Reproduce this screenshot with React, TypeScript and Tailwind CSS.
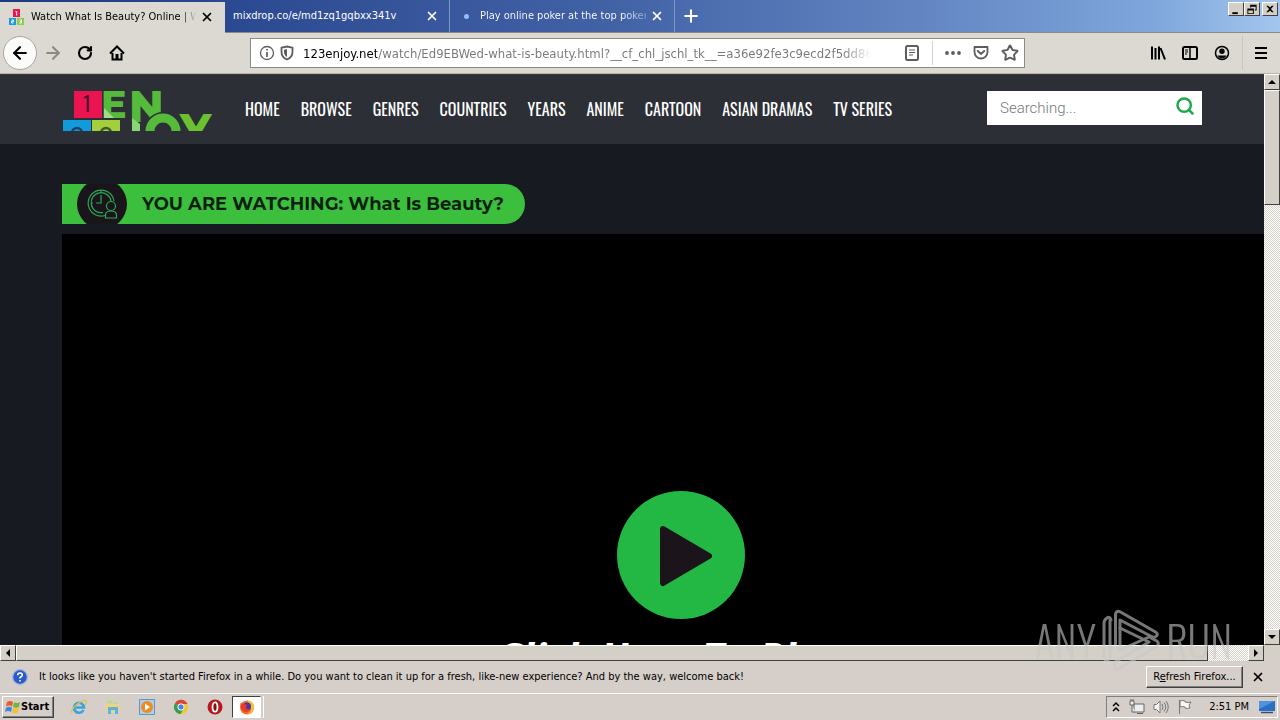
import {
  ArrowLeft,
  ArrowRight,
  Plus,
  RotateCw,
  Search,
  Star,
  X,
} from "lucide-react";

const NAV_LINKS = [
  "HOME",
  "BROWSE",
  "GENRES",
  "COUNTRIES",
  "YEARS",
  "ANIME",
  "CARTOON",
  "ASIAN DRAMAS",
  "TV SERIES",
];

const PAGE_URL =
  "123enjoy.net/watch/Ed9EBWed-what-is-beauty.html?__cf_chl_jschl_tk__=a36e92fe3c9ecd2f5dd86b";

function BlocksIcon() {
  return (
    <svg viewBox="0 0 16 16" className="h-4 w-4 shrink-0">
      <rect x="4" y="0" width="7" height="8" fill="#e8174f" />
      <rect x="0" y="9" width="7" height="7" fill="#1a9be0" />
      <rect x="8" y="9" width="7" height="7" fill="#8ad04a" />
      <path d="M6.500 2.500h1.200v4M2.500 11h2v1.500h-2V14h2M10.500 11h2v3h-2M11 12.500h1.500" stroke="#fff" strokeWidth="1" fill="none" />
    </svg>
  );
}

function TabStrip() {
  return (
    <div className="flex h-[33px] shrink-0 border-b border-[#8c8a86] bg-[linear-gradient(to_right,#1c3a82_0%,#2d4b92_20%,#4262a6_48%,#6386c2_72%,#7ea6dc_90%,#a3c6ee_100%)] text-[11px] text-white">
      <div className="-mb-px mt-[2px] flex w-[225px] items-center bg-[#dcd9d2] pb-px pl-[9px] pr-[11px] text-black">
        <BlocksIcon />
        <span className="ml-[6px] flex-1 overflow-hidden whitespace-nowrap bg-[linear-gradient(to_right,#000_150px,transparent_165px)] bg-clip-text text-transparent">
          Watch What Is Beauty? Online | W
        </span>
        <button aria-label="Close tab" className="ml-1">
          <X className="h-[14px] w-[14px]" strokeWidth={3} />
        </button>
      </div>
      <div className="flex w-[225px] items-center border-r border-[#8397c6] pl-2 pr-[10px]">
        <span className="flex-1 whitespace-nowrap">mixdrop.co/e/md1zq1gqbxx341v</span>
        <button aria-label="Close tab">
          <X className="h-[14px] w-[14px]" strokeWidth={3} />
        </button>
      </div>
      <div className="flex w-[225px] items-center border-r border-[#8397c6] pl-[14px] pr-[10px]">
        <span className="h-[5px] w-[5px] shrink-0 rounded-full bg-[#8fc1f5]" />
        <span className="ml-[11px] flex-1 overflow-hidden whitespace-nowrap bg-[linear-gradient(to_right,#fff_142px,#ffffff60_165px)] bg-clip-text text-transparent">
          Play online poker at the top poker
        </span>
        <button aria-label="Close tab" className="ml-1">
          <X className="h-[14px] w-[14px]" strokeWidth={3} />
        </button>
      </div>
      <button aria-label="New tab" className="ml-[6px]">
        <Plus className="h-5 w-5" strokeWidth={2.5} />
      </button>
      <div className="ml-auto flex items-start pr-[2px] pt-[2px] text-black">
        <WindowButton label="Minimize">
          <path d="M3 10h6v2H3z" />
        </WindowButton>
        <WindowButton label="Restore">
          <path d="M5 2h7v6h-2V7h1V4H6v1H5zM2 6h7v6H2zM3 8v3h5V8z" fillRule="evenodd" />
        </WindowButton>
        <span className="w-[2px]" />
        <WindowButton label="Close">
          <path d="M3 3h2l2 2 2-2h2L8 6.500 11 10H9L7 8l-2 2H3l3-3.500z" />
        </WindowButton>
      </div>
    </div>
  );
}

function WindowButton({ label, children }: { label: string; children: React.ReactNode }) {
  return (
    <button
      aria-label={label}
      className="h-[14px] w-4 border border-[#404040] border-l-white border-t-white bg-[#d4d0c8]"
    >
      <svg viewBox="0 0 14 13" className="h-3 w-[14px]">
        {children}
      </svg>
    </button>
  );
}

function Toolbar() {
  return (
    <div className="flex h-[41px] shrink-0 items-center border-b border-[#b5b2aa] bg-[#dcd9d2] pl-[3px] pr-[11px]">
      <button
        aria-label="Back"
        className="flex h-[34px] w-[34px] items-center justify-center rounded-full border border-[#a8a6a0] bg-[#fbfbfa]"
      >
        <ArrowLeft className="h-5 w-5" strokeWidth={2.5} />
      </button>
      <button aria-label="Forward" className="ml-[6px] text-[#8b8985]">
        <ArrowRight className="h-5 w-5" strokeWidth={2.5} />
      </button>
      <button aria-label="Reload" className="ml-[14px]">
        <RotateCw className="h-4 w-4" strokeWidth={3.2} />
      </button>
      <button aria-label="Home" className="ml-4">
        <svg viewBox="0 0 16 16" className="h-4 w-4">
          <path d="M1 8.500L8 1.500l7 7M3.500 8v6.500h9V8" fill="none" stroke="#000" strokeWidth="2" />
          <path d="M6.500 9h3v5h-3z" />
        </svg>
      </button>
      <div className="ml-[125px] flex h-[30px] w-[775px] items-center border border-[#8d8b87] bg-white text-[#5d5d5d]">
        <svg viewBox="0 0 16 16" className="ml-2 h-4 w-4 shrink-0" fill="none" stroke="currentColor">
          <circle cx="8" cy="8" r="6.500" strokeWidth="1.300" />
          <path d="M8 7v5M8 4v1.600" strokeWidth="1.700" />
        </svg>
        <svg viewBox="0 0 16 16" className="ml-1 h-4 w-4 shrink-0">
          <path d="M8 1.500l5.500 1.200V7c0 4-2.500 6.300-5.500 7.500C5 13.300 2.500 11 2.500 7V2.700z" fill="none" stroke="currentColor" strokeWidth="1.800" />
          <path d="M8 4l-3 .7V7c0 2.500 1.300 4 3 5z" fill="currentColor" />
        </svg>
        <input
          aria-label="Address"
          readOnly
          value={PAGE_URL}
          className="ml-2 h-7 min-w-0 flex-1 bg-[linear-gradient(to_right,#000_74px,#777_74px,#777_540px,transparent_568px)] bg-clip-text text-[13px] text-transparent outline-none"
        />
        <svg viewBox="0 0 16 16" className="ml-[34px] h-4 w-4 shrink-0" fill="none" stroke="currentColor">
          <rect x="2" y="1" width="12" height="14" rx="1.500" strokeWidth="2" />
          <path d="M5 5h6M5 7.500h6M5 10h4" strokeWidth="1.200" />
        </svg>
        <span className="ml-3 h-6 w-px bg-[#d2d2d2]" />
        <svg viewBox="0 0 16 16" className="ml-3 h-4 w-4 shrink-0" fill="currentColor">
          <circle cx="2" cy="8" r="1.900" />
          <circle cx="8" cy="8" r="1.900" />
          <circle cx="14" cy="8" r="1.900" />
        </svg>
        <svg viewBox="0 0 16 16" className="ml-3 h-4 w-4 shrink-0" fill="none" stroke="currentColor" strokeWidth="1.800">
          <path d="M1.500 2h13v5a6.500 6.500 0 0 1-13 0z" strokeLinejoin="round" />
          <path d="M4.800 6L8 9l3.200-3" strokeWidth="2" strokeLinecap="round" />
        </svg>
        <Star className="ml-3 mr-[5px] h-[18px] w-[18px] shrink-0" strokeWidth={2.6} />
      </div>
      <div className="ml-auto flex items-center">
        <button aria-label="Library">
          <svg viewBox="0 0 16 16" className="h-4 w-4" stroke="#000" strokeWidth="2">
            <path d="M2 1.500v13M5.500 3v11.500M9 1.500v13M10.500 3L15 14.500" />
          </svg>
        </button>
        <button aria-label="Sidebars" className="ml-4">
          <svg viewBox="0 0 16 16" className="h-4 w-4" fill="none" stroke="#000">
            <rect x="1" y="2" width="14" height="12" rx="1.500" strokeWidth="2" />
            <path d="M8 2v12" strokeWidth="1.500" />
            <path d="M3 5h3M3 7h3M3 9h2" />
          </svg>
        </button>
        <button aria-label="Account" className="ml-4">
          <svg viewBox="0 0 16 16" className="h-4 w-4">
            <circle cx="8" cy="8" r="6.500" fill="none" stroke="#000" strokeWidth="1.500" />
            <circle cx="8" cy="6.200" r="2.700" />
            <path d="M3.500 10.500h9C11.500 12.500 10 13.500 8 13.500s-3.500-1-4.500-3z" />
          </svg>
        </button>
        <span className="ml-3 h-[34px] w-px bg-[#c9c6bf]" />
        <button aria-label="Menu" className="ml-[10px]">
          <svg viewBox="0 0 16 16" className="h-4 w-4" stroke="#000" strokeWidth="2">
            <path d="M2 3h12M2 8h12M2 13h12" />
          </svg>
        </button>
      </div>
    </div>
  );
}

function SiteLogo() {
  return (
    <svg viewBox="0 0 152 40" className="h-10 w-[152px] shrink-0 overflow-hidden font-['Montserrat',sans-serif] font-extrabold">
      <rect x="12" y="0" width="28" height="27" fill="#ea1550" />
      <text x="21" y="21" fontSize="20" fontFamily="Oswald" fontWeight="400" fill="#4b1430">1</text>
      <rect x="1" y="29" width="28" height="12" fill="#129bdc" />
      <circle cx="15" cy="42" r="5" fill="none" stroke="#174766" strokeWidth="2.500" />
      <rect x="30" y="29" width="28" height="12" fill="#a3cf3c" />
      <circle cx="44" cy="42" r="5" fill="none" stroke="#3d5d2b" strokeWidth="2.500" />
      <text x="39" y="27" fontSize="38" fill="#56bb3a">E</text>
      <path d="M42 17l10 10H42z" fill="#9fdc8b" />
      <text x="67" y="31" fontSize="43" fill="#56bb3a">N</text>
      <path d="M70 27l8 6v7h-8z" fill="#8bd576" />
      <circle cx="101" cy="40" r="13" fill="#2d2f36" stroke="#2d2f36" strokeWidth="12" />
      <circle cx="101" cy="40" r="13" fill="none" stroke="#56bb3a" strokeWidth="9" />
      <text x="118" y="55" fontSize="45" fill="#6cc131">Y</text>
    </svg>
  );
}

function SiteHeader() {
  return (
    <header className="h-[70px] border-t border-[#3a3b38] bg-[#2d2f36] pl-[62px] pt-4">
      <div className="flex w-[1140px] items-start">
        <SiteLogo />
        <nav className="ml-[31px] flex gap-[21px] font-['Oswald',sans-serif] text-[16px] leading-9 text-white">
          {NAV_LINKS.map((label) => (
            <a key={label} href="#" className="whitespace-nowrap">
              {label}
            </a>
          ))}
        </nav>
        <form className="ml-auto flex h-[34px] w-[215px] items-center bg-white">
          <input
            aria-label="Search"
            placeholder="Searching..."
            className="h-full min-w-0 flex-1 pl-[13px] font-['Roboto',sans-serif] text-[15px] font-light outline-none placeholder:text-[#777]"
          />
          <button type="button" aria-label="Search" className="mb-1 mr-[7px]">
            <Search className="h-5 w-5 text-[#22a84c]" strokeWidth={3} />
          </button>
        </form>
      </div>
    </header>
  );
}

function WatchingBanner() {
  return (
    <div className="flex h-10 w-[463px] items-center overflow-hidden rounded-r-[20px] bg-[#3bbf3c]">
      <span className="ml-[15px] flex h-[50px] w-[50px] shrink-0 items-center justify-center rounded-full bg-[#1a141b]">
        <svg viewBox="0 0 32 32" className="h-8 w-8" fill="none" stroke="#2aa957" strokeWidth="1.200">
          <path d="M19 27.500A13 13 0 1 1 28 13" />
          <path d="M17 24.500A10 10 0 1 1 25 13" />
          <path d="M15 7v8h-5M15 3v2M5 15h2" />
          <circle cx="25" cy="18" r="4.500" />
          <path d="M19.500 30v-3q0-4 5.500-4t5.500 4v3z" />
        </svg>
      </span>
      <h1 className="ml-[15px] whitespace-nowrap pt-px font-['Montserrat',sans-serif] text-[18px] font-bold text-[#0c1f12]">
        YOU ARE WATCHING: What Is Beauty?
      </h1>
    </div>
  );
}

function Player() {
  return (
    <div className="-mr-9 ml-[62px] mt-[10px] flex h-[600px] flex-col items-center bg-black pt-[257px]">
      <button aria-label="Play" className="h-[128px] w-[128px]">
        <svg viewBox="0 0 128 128" className="h-full w-full">
          <circle cx="64" cy="64" r="64" fill="#22b843" />
          <path d="M46 38l46 27-46 27z" fill="#1c141b" stroke="#1c141b" strokeWidth="6" strokeLinejoin="round" />
        </svg>
      </button>
      <p className="mt-[14px] whitespace-nowrap pr-6 font-['Open_Sans',sans-serif] text-[41px] font-bold italic leading-[48px] text-white">
        Click Here To Play
      </p>
    </div>
  );
}

function ScrollButton({ label, path }: { label: string; path: string }) {
  return (
    <button
      aria-label={label}
      className="flex h-4 w-4 shrink-0 items-center justify-center border border-[#404040] border-l-white border-t-white bg-[#d4d0c8]"
    >
      <svg viewBox="0 0 8 8" className="h-2 w-2">
        <path d={path} />
      </svg>
    </button>
  );
}

function Watermark() {
  return (
    <div className="pointer-events-none absolute bottom-[48px] right-[48px] flex items-center font-['Oswald',sans-serif] text-[42px] font-light leading-[64px] text-[#c8c8c8] opacity-60">
      <span>ANY</span>
      <svg viewBox="0 0 60 64" className="ml-[6px] mr-1 h-16 w-[60px]" fill="none" stroke="currentColor" strokeWidth="3" strokeLinejoin="round" strokeLinecap="round">
        <path d="M9 12Q8 8 5 10 2 12 2 15v34q0 4 4 3M8 12v38" />
        <path d="M13.500 36V6q1-4 5-2l35 20q3 2 1 4t-4 1L18 12v30l29-13" />
        <path d="M18 20l29 14-34 20q-2 4 0 6t5 0l36-21q4-3 1-6l-6-3" />
      </svg>
      <span>RUN</span>
    </div>
  );
}

function Notification() {
  return (
    <div className="flex h-8 shrink-0 items-center bg-[#d6cfc9] pl-3 pr-[15px] text-[11px]">
      <svg viewBox="0 0 16 16" className="h-4 w-4 shrink-0">
        <circle cx="8" cy="8" r="7.300" fill="#2a5bc8" stroke="#9fb2d8" strokeWidth="1.200" />
        <path d="M5.700 6.200Q5.700 4 8 4t2.300 2q0 1.300-2.300 2.500v1M8 11v1.600" fill="none" stroke="#fff" strokeWidth="1.600" />
      </svg>
      <span className="ml-[11px] whitespace-nowrap">
        It looks like you haven't started Firefox in a while. Do you want to clean it up for a fresh, like-new experience? And by the way, welcome back!
      </span>
      <button className="ml-auto h-[22px] w-[97px] shrink-0 whitespace-nowrap border border-[#404040] border-l-white border-t-white shadow-[inset_-1px_-1px_#808080]">
        R<u>e</u>fresh Firefox...
      </button>
      <button aria-label="Dismiss" className="ml-2">
        <X className="h-[14px] w-[14px]" strokeWidth={3} />
      </button>
    </div>
  );
}

function Taskbar() {
  return (
    <div className="flex h-[27px] shrink-0 items-center border-t border-white bg-[#d6cfc9] pl-[2px] pr-[2px] text-[11px]">
      <button className="flex h-[22px] w-[52px] items-center border border-[#404040] border-l-white border-t-white pl-[2px] font-bold shadow-[inset_-1px_-1px_#808080]">
        <svg viewBox="0 0 16 16" className="h-4 w-4 shrink-0">
          <path d="M2 3q3-2 6 0L7 7.500q-3-2-6 0z" fill="#ea5b2c" />
          <path d="M9 3.300q3 1.500 6 0L14 8q-3 1.500-6 0z" fill="#72b63c" />
          <path d="M1 8.700q3-2 6 0L6 13q-3-2-6 0z" fill="#3f86dc" />
          <path d="M8 9q3 1.500 6 0l-1 4.500q-3 1.500-6 0z" fill="#f4c030" />
        </svg>
        Start
      </button>
      <div className="ml-[17px] flex items-center gap-[18px]">
        <svg viewBox="0 0 16 16" className="h-4 w-4">
          <path d="M12.500 11A5 5 0 1 1 13 8.500H4" fill="none" stroke="#37a5e0" strokeWidth="2.600" />
          <path d="M1 14Q-1 11 6 5.500T15 2q1 1-1 4" fill="none" stroke="#e8bf45" strokeWidth="1.300" />
        </svg>
        <svg viewBox="0 0 16 16" className="h-4 w-4">
          <path d="M1 3h5l1 1h7v9H1z" fill="#efd480" />
          <path d="M2 1.500h5v3H2zM8 3h5v2H8z" fill="#b9d8a0" />
          <path d="M3 8h10v7h-3v-4H6v4H3z" fill="#59b3dd" />
        </svg>
        <svg viewBox="0 0 16 16" className="h-4 w-4">
          <path d="M.5.5h15v15H.5z" fill="#a9d0ed" stroke="#5a96c7" />
          <circle cx="8" cy="8" r="6" fill="#f18a1d" />
          <path d="M6 4.500l5 3.500-5 3.500z" fill="#fff" />
        </svg>
        <svg viewBox="0 0 16 16" className="h-4 w-4">
          <circle cx="8" cy="8" r="7" fill="#f0c62c" />
          <path d="M8 8L1.900 4.500A7 7 0 0 1 14.500 5H8z" fill="#dd4436" />
          <path d="M8 8L1.900 4.500A7 7 0 0 0 7.500 15L11 9z" fill="#2f9e52" />
          <circle cx="8" cy="8" r="3.200" fill="#4684e8" stroke="#fff" strokeWidth="1" />
        </svg>
        <svg viewBox="0 0 16 16" className="h-4 w-4">
          <circle cx="8" cy="8" r="7.500" fill="#b8171d" />
          <ellipse cx="8" cy="8" rx="2.500" ry="4.700" fill="#8a0d12" stroke="#fff" strokeWidth="1.800" />
        </svg>
      </div>
      <button
        aria-label="Firefox"
        className="ml-[9px] flex h-[22px] w-[29px] items-center justify-center border border-white border-l-[#404040] border-t-[#404040] bg-white"
      >
        <svg viewBox="0 0 16 16" className="h-4 w-4">
          <circle cx="8" cy="8.500" r="7" fill="#f37321" />
          <path d="M8 1.500q7 1 7 7-1 6-7 7 5-3 4-8z" fill="#fbc02f" />
          <circle cx="8" cy="7.500" r="4" fill="#3f3aa8" />
          <path d="M1.500 4l3 1 4 1-2 2q1 3 5 2-2 4-6 3T1.500 4z" fill="#f0392d" />
        </svg>
      </button>
      <span className="h-[22px] w-[3px] border-r border-white" />
      <div className="ml-auto flex h-[22px] items-center border border-white border-l-[#808080] border-t-[#808080] pl-1 pr-[2px]">
        <svg viewBox="0 0 10 12" className="h-3 w-[10px]" fill="none" stroke="#000" strokeWidth="1.500">
          <path d="M2 5l3-3 3 3M2 10l3-3 3 3" />
        </svg>
        <svg viewBox="0 0 16 16" className="ml-2 h-4 w-4" fill="#eee" stroke="#666">
          <path d="M5 5h10v8H5zM8 14.500h6" />
          <path d="M1 2h4v4H1zM3 6v7h3M2 0v2M4 0v2" />
        </svg>
        <svg viewBox="0 0 16 16" className="ml-2 h-4 w-4" fill="none" stroke="#777">
          <path d="M1 5.500h2.500L7 2v12l-3.500-3.500H1z" fill="#f5f5f5" />
          <path d="M9 5q2 3 0 6M11 3.500q3.500 4.500 0 9M13 2q4.500 6 0 12" />
        </svg>
        <svg viewBox="0 0 16 16" className="ml-2 h-4 w-4" fill="#f8f8f8" stroke="#777">
          <path d="M2.500 15V1M3 2q3-1 5 0v1q3 1 6 0l-2 3 1 3q-3 1-5 0V8q-3-1-5 0z" />
        </svg>
        <span className="ml-4">2:51 PM</span>
        <svg viewBox="0 0 16 16" className="ml-[10px] h-4 w-4">
          <path d="M0 2h16v10H0z" fill="#2b6fc4" />
          <path d="M0 2h16L0 10z" fill="#4e93dc" />
          <path d="M2 13.500h12" stroke="#3c4f66" strokeWidth="1.500" />
        </svg>
      </div>
    </div>
  );
}

export default function App() {
  return (
    <div className="relative flex h-screen flex-col overflow-hidden bg-[#d6cfc9] font-['Tahoma','DejaVu_Sans_Condensed','Noto_Sans',sans-serif] text-black">
      <TabStrip />
      <Toolbar />
      <div className="flex min-h-0 flex-1">
        <main className="min-w-0 flex-1 overflow-hidden bg-[#181a21]">
          <SiteHeader />
          <div className="pl-[62px] pt-10">
            <WatchingBanner />
          </div>
          <Player />
        </main>
        <div className="flex w-4 shrink-0 flex-col bg-[repeating-conic-gradient(#fff_0_25%,#d4d0c8_0_50%)] bg-[length:2px_2px]">
          <ScrollButton label="Scroll up" path="M0 6l4-4 4 4z" />
          <div className="h-[115px] border border-[#404040] border-l-white border-t-white bg-[#d4d0c8]" />
          <span className="flex-1" />
          <ScrollButton label="Scroll down" path="M0 2l4 4 4-4z" />
        </div>
      </div>
      <div className="flex h-4 shrink-0 bg-[repeating-conic-gradient(#fff_0_25%,#d4d0c8_0_50%)] bg-[length:2px_2px]">
        <ScrollButton label="Scroll left" path="M6 0L2 4l4 4z" />
        <div className="w-[1192px] border border-[#404040] border-l-white border-t-white bg-[#d4d0c8]" />
        <span className="flex-1" />
        <ScrollButton label="Scroll right" path="M2 0l4 4-4 4z" />
        <div className="w-4 bg-[#d4d0c8]" />
      </div>
      <Notification />
      <Taskbar />
      <Watermark />
    </div>
  );
}
